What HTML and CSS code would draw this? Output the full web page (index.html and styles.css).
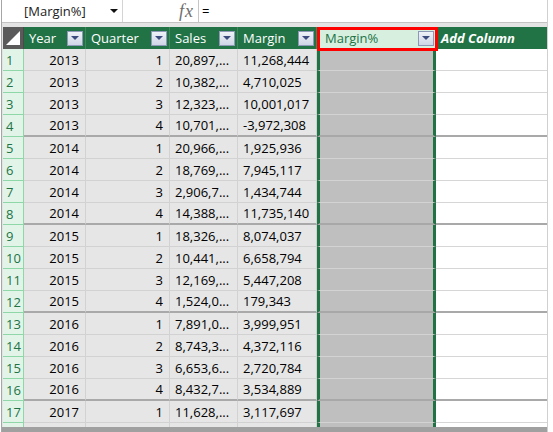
FILE: index.html
```html
<!DOCTYPE html>
<html lang="en">
<head>
  <meta charset="UTF-8">
  <title>Margin%</title>
  <link rel="stylesheet" href="styles.css">
</head>
<body>
  <div class="app">
    <div class="fbar">
      <div class="namebox">
        <span class="name">[Margin%]</span>
        <span class="nb-arrow"></span>
      </div>
      <div class="fx-zone"><span class="fx">fx</span></div>
      <div class="formula">=</div>
    </div>
    <div class="band"></div>

    <div class="grid">
      <div class="row head">
        <div class="cell rn corner">
          <svg width="14" height="14" viewBox="0 0 14 14"><polygon points="14,0 14,14 0,14" fill="#fff"/></svg>
        </div>
        <div class="cell c-year">Year<span class="dd"></span></div>
        <div class="cell c-qtr">Quarter<span class="dd"></span></div>
        <div class="cell c-sales">Sales<span class="dd"></span></div>
        <div class="cell c-margin">Margin<span class="dd"></span></div>
        <div class="cell c-pct">Margin%<span class="dd"></span></div>
        <div class="cell c-add">Add Column</div>
      </div>

      <div class="row"><div class="cell rn">1</div><div class="cell c-year">2013</div><div class="cell c-qtr">1</div><div class="cell c-sales">20,897,...</div><div class="cell c-margin">11,268,444</div><div class="cell c-pct"></div><div class="cell c-add"></div></div>
      <div class="row"><div class="cell rn">2</div><div class="cell c-year">2013</div><div class="cell c-qtr">2</div><div class="cell c-sales">10,382,...</div><div class="cell c-margin">4,710,025</div><div class="cell c-pct"></div><div class="cell c-add"></div></div>
      <div class="row"><div class="cell rn">3</div><div class="cell c-year">2013</div><div class="cell c-qtr">3</div><div class="cell c-sales">12,323,...</div><div class="cell c-margin">10,001,017</div><div class="cell c-pct"></div><div class="cell c-add"></div></div>
      <div class="row group-end"><div class="cell rn">4</div><div class="cell c-year">2013</div><div class="cell c-qtr">4</div><div class="cell c-sales">10,701,...</div><div class="cell c-margin">-3,972,308</div><div class="cell c-pct"></div><div class="cell c-add"></div></div>

      <div class="row"><div class="cell rn">5</div><div class="cell c-year">2014</div><div class="cell c-qtr">1</div><div class="cell c-sales">20,966,...</div><div class="cell c-margin">1,925,936</div><div class="cell c-pct"></div><div class="cell c-add"></div></div>
      <div class="row"><div class="cell rn">6</div><div class="cell c-year">2014</div><div class="cell c-qtr">2</div><div class="cell c-sales">18,769,...</div><div class="cell c-margin">7,945,117</div><div class="cell c-pct"></div><div class="cell c-add"></div></div>
      <div class="row"><div class="cell rn">7</div><div class="cell c-year">2014</div><div class="cell c-qtr">3</div><div class="cell c-sales">2,906,7...</div><div class="cell c-margin">1,434,744</div><div class="cell c-pct"></div><div class="cell c-add"></div></div>
      <div class="row group-end"><div class="cell rn">8</div><div class="cell c-year">2014</div><div class="cell c-qtr">4</div><div class="cell c-sales">14,388,...</div><div class="cell c-margin">11,735,140</div><div class="cell c-pct"></div><div class="cell c-add"></div></div>

      <div class="row"><div class="cell rn">9</div><div class="cell c-year">2015</div><div class="cell c-qtr">1</div><div class="cell c-sales">18,326,...</div><div class="cell c-margin">8,074,037</div><div class="cell c-pct"></div><div class="cell c-add"></div></div>
      <div class="row"><div class="cell rn">10</div><div class="cell c-year">2015</div><div class="cell c-qtr">2</div><div class="cell c-sales">10,441,...</div><div class="cell c-margin">6,658,794</div><div class="cell c-pct"></div><div class="cell c-add"></div></div>
      <div class="row"><div class="cell rn">11</div><div class="cell c-year">2015</div><div class="cell c-qtr">3</div><div class="cell c-sales">12,169,...</div><div class="cell c-margin">5,447,208</div><div class="cell c-pct"></div><div class="cell c-add"></div></div>
      <div class="row group-end"><div class="cell rn">12</div><div class="cell c-year">2015</div><div class="cell c-qtr">4</div><div class="cell c-sales">1,524,0...</div><div class="cell c-margin">179,343</div><div class="cell c-pct"></div><div class="cell c-add"></div></div>

      <div class="row"><div class="cell rn">13</div><div class="cell c-year">2016</div><div class="cell c-qtr">1</div><div class="cell c-sales">7,891,0...</div><div class="cell c-margin">3,999,951</div><div class="cell c-pct"></div><div class="cell c-add"></div></div>
      <div class="row"><div class="cell rn">14</div><div class="cell c-year">2016</div><div class="cell c-qtr">2</div><div class="cell c-sales">8,743,3...</div><div class="cell c-margin">4,372,116</div><div class="cell c-pct"></div><div class="cell c-add"></div></div>
      <div class="row"><div class="cell rn">15</div><div class="cell c-year">2016</div><div class="cell c-qtr">3</div><div class="cell c-sales">6,653,6...</div><div class="cell c-margin">2,720,784</div><div class="cell c-pct"></div><div class="cell c-add"></div></div>
      <div class="row group-end"><div class="cell rn">16</div><div class="cell c-year">2016</div><div class="cell c-qtr">4</div><div class="cell c-sales">8,432,7...</div><div class="cell c-margin">3,534,889</div><div class="cell c-pct"></div><div class="cell c-add"></div></div>

      <div class="row"><div class="cell rn">17</div><div class="cell c-year">2017</div><div class="cell c-qtr">1</div><div class="cell c-sales">11,628,...</div><div class="cell c-margin">3,117,697</div><div class="cell c-pct"></div><div class="cell c-add"></div></div>
      <!-- next row only peeks in under the scrollbar -->
      <div class="row"><div class="cell rn"></div><div class="cell c-year"></div><div class="cell c-qtr"></div><div class="cell c-sales"></div><div class="cell c-margin"></div><div class="cell c-pct"></div><div class="cell c-add"></div></div>
    </div>

    <div class="hscroll"></div>
  </div>
</body>
</html>
```

FILE: styles.css
```css
:root {
  --xl-green: #217346;
  --rn-bg: #e2f4e8;
  --rn-line: #8fd6a8;
  --cell-bg: #e6e6e6;
  --cell-line: #d2d2d2;
  --group-line: #a9a9a9;
  --sel-bg: #bfbfbf;
  --frame: #a6a6a6;
}

* {
  margin: 0;
  padding: 0;
  box-sizing: border-box;
}

body {
  font-family: "Open Sans", "Noto Sans", sans-serif;
  font-size: 13px;
  color: #000;
  background: #fff;
  width: 553px;
  height: 432px;
  overflow: hidden;
}

.app {
  margin-left: 1px;
  width: 547px;
  height: 432px;
  border-left: 1px solid var(--frame);
  border-right: 1px solid #d0d0d0;
  display: flex;
  flex-direction: column;
}

/* formula bar */
.fbar {
  display: flex;
  height: 23px;
  flex-shrink: 0;
  border-bottom: 1px solid #c3c3c3;
  background: #fff;
}

.namebox {
  width: 121px;
  display: flex;
  align-items: center;
  padding-left: 22px;
  border-right: 1px solid #d4d4d4;
  color: #222;
}

.nb-arrow {
  margin-left: auto;
  margin-right: 4px;
  width: 0;
  height: 0;
  border-left: 4px solid transparent;
  border-right: 4px solid transparent;
  border-top: 4px solid #111;
}

.fx-zone {
  width: 76px;
  display: flex;
  align-items: center;
  justify-content: flex-end;
  padding-right: 4px;
  border-right: 1px solid #c6c6c6;
}

.fx {
  font-family: "Liberation Serif", serif;
  font-style: italic;
  font-size: 18px;
  color: #6e6e6e;
  letter-spacing: 1px;
}

.formula {
  flex: 1;
  display: flex;
  align-items: center;
  padding-left: 3px;
}

.band {
  height: 4px;
  flex-shrink: 0;
  background: #e4e4e4;
}

/* grid */
.grid {
  flex: 1;
  overflow: hidden;
  padding-left: 1px;
  background: #e4e4e4;
}

.row {
  display: flex;
  height: 22px;
}

.cell {
  height: 22px;
  display: flex;
  align-items: center;
  white-space: nowrap;
  overflow: hidden;
  background: var(--cell-bg);
  border-right: 1px solid var(--cell-line);
  border-bottom: 1px solid var(--cell-line);
}

.rn {
  width: 21px;
  padding-left: 3px;
  background: var(--rn-bg);
  color: var(--xl-green);
  border-right: 1px solid var(--rn-line);
  border-bottom: 1px solid var(--rn-line);
}

.c-year {
  width: 62px;
  justify-content: flex-end;
  padding-right: 6px;
}

.c-qtr {
  width: 84px;
  justify-content: flex-end;
  padding-right: 6px;
}

.c-sales {
  width: 68px;
  padding-left: 5px;
}

.c-margin {
  width: 79px;
  padding-left: 5px;
}

.c-pct {
  width: 119px;
  background: var(--sel-bg);
  border-left: 3px solid var(--xl-green);
  border-right: 3px solid var(--xl-green);
  border-bottom-color: #d3d3d3;
}

.c-add {
  width: 111px;
  background: #fff;
  border-right: none;
  border-bottom-color: #d6d6d6;
}

.group-end .cell {
  border-bottom: 2px solid var(--group-line);
}

.group-end .rn {
  border-bottom: 1px solid var(--rn-line);
}

.group-end .c-pct {
  border-bottom-color: #a8a8a8;
}

/* header row */
.head .cell {
  background: var(--xl-green);
  color: #fff;
  justify-content: space-between;
  padding-left: 5px;
  padding-right: 2px;
  border-bottom: none;
  border-right: 1px solid #3c8a5c;
}

.head .corner {
  background: #5a5a5a;
  padding: 0;
  justify-content: center;
  border-right: 1px solid #4a4a4a;
}

.head .c-pct {
  position: relative;
  background: #d7efdf;
  color: var(--xl-green);
  overflow: visible;
  padding-right: 1px;
}

.head .c-pct::after {
  content: "";
  position: absolute;
  top: 0;
  left: -3px;
  right: -3px;
  bottom: -2px;
  border: 3px solid #ff0000;
  pointer-events: none;
}

.head .c-add {
  font-weight: 700;
  font-style: italic;
  border-right: none;
}

.dd {
  width: 16px;
  height: 15px;
  flex-shrink: 0;
  display: flex;
  align-items: center;
  justify-content: center;
  border: 1px solid #8d98b6;
  background: linear-gradient(#eef1f7, #cfd6e6);
}

.dd::before {
  content: "";
  width: 0;
  height: 0;
  border-left: 4px solid transparent;
  border-right: 4px solid transparent;
  border-top: 4px solid #3b4b7d;
}

.hscroll {
  height: 5px;
  flex-shrink: 0;
  background: #a0a0a0;
}
```
